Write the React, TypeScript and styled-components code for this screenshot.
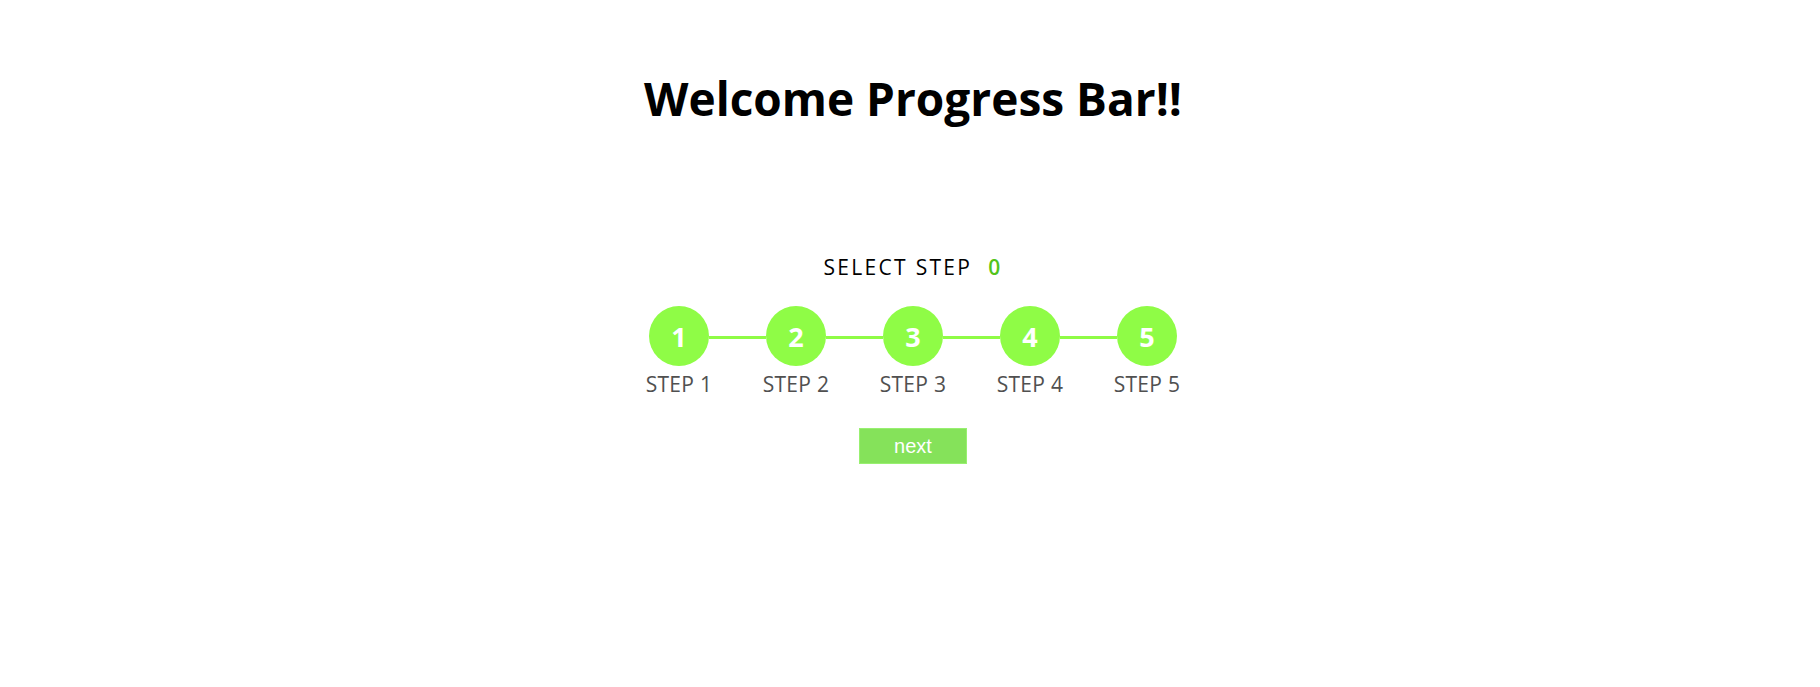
import React from "react";
import styled, { createGlobalStyle } from "styled-components";

const GlobalStyle = createGlobalStyle`
  html, body {
    margin: 0;
    padding: 0;
    background: #ffffff;
    font-family: "Open Sans", "Noto Sans", sans-serif;
  }
`;

const Page = styled.main`
  display: flex;
  flex-direction: column;
  align-items: center;
  padding-top: 75px;
  min-height: 687px;
  box-sizing: border-box;
`;

const Title = styled.h1`
  margin: 0 0 0 6px;
  font-size: 46px;
  line-height: 1;
  font-weight: 700;
  color: #000;
`;

const Stepper = styled.section`
  margin-top: 136px;
  display: flex;
  flex-direction: column;
  align-items: center;
`;

const SelectLabel = styled.div`
  font-size: 21px;
  line-height: 1;
  letter-spacing: 2.3px;
  color: #000;
  display: flex;
  align-items: baseline;
  gap: 16px;
  margin-left: 6px;
`;

const Count = styled.span`
  color: #52c41a;
  font-weight: 600;
`;

const Track = styled.div`
  display: flex;
  align-items: flex-start;
  margin-top: 28px;
  margin-left: 6px;
`;

const Step = styled.div`
  display: flex;
  flex-direction: column;
  align-items: center;
  width: 60px;
`;

const Circle = styled.div`
  width: 60px;
  height: 60px;
  border-radius: 50%;
  background: #8ffc46;
  color: #ffffff;
  font-weight: 700;
  font-size: 27px;
  display: flex;
  align-items: center;
  justify-content: center;
`;

const Connector = styled.div`
  width: 57px;
  height: 3px;
  margin-top: 30px;
  background: #8ffc46;
`;

const StepLabel = styled.div`
  margin-top: 6px;
  font-size: 21px;
  line-height: 24px;
  letter-spacing: 0.3px;
  color: #505050;
  white-space: nowrap;
`;

const NextButton = styled.button`
  margin-top: 32px;
  margin-left: 6px;
  width: 108px;
  height: 36px;
  background: #85e25a;
  border: 1px solid #98f070;
  color: #ffffff;
  font-family: "Liberation Sans", Arial, sans-serif;
  font-size: 20px;
  padding: 0;
  cursor: pointer;
`;

const steps = [1, 2, 3, 4, 5];

export default function App() {
  return (
    <>
      <GlobalStyle />
      <Page>
        <Title>Welcome Progress Bar!!</Title>
        <Stepper>
          <SelectLabel>
            <span>SELECT STEP</span>
            <Count>0</Count>
          </SelectLabel>
          <Track>
            {steps.map((n, i) => (
              <React.Fragment key={n}>
                {i > 0 && <Connector />}
                <Step>
                  <Circle>{n}</Circle>
                  <StepLabel>STEP {n}</StepLabel>
                </Step>
              </React.Fragment>
            ))}
          </Track>
          <NextButton>next</NextButton>
        </Stepper>
      </Page>
    </>
  );
}
